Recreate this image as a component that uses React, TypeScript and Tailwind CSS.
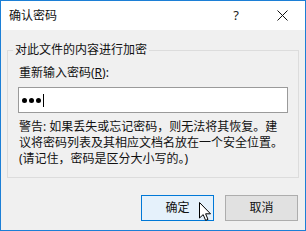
import React from 'react';

const font = { fontFamily: '"Noto Sans", "Noto Sans CJK SC", sans-serif' };

export default function App() {
  return (
    <div
      className="w-[306px] h-[231px] border border-[#1c7fd6] flex flex-col text-[12px] text-black select-none"
      style={font}
    >
      {/* Title bar */}
      <div className="h-[29px] bg-white flex items-center shrink-0">
        <div className="flex-1 pl-[8px] leading-[16px] text-[#111]">确认密码</div>
        <div className="w-[46px] h-full flex items-center justify-center text-[13px] leading-none text-[#222]">?</div>
        <div className="w-[46px] h-full flex items-center justify-center">
          <svg width="11" height="11" viewBox="0 0 11 11">
            <path d="M0.5 0.5 L10.5 10.5 M10.5 0.5 L0.5 10.5" stroke="#111" strokeWidth="1" fill="none" />
          </svg>
        </div>
      </div>

      {/* Body */}
      <div className="flex-1 bg-[#f0f0f0] px-[6px] flex flex-col relative">
        <fieldset className="mt-[12px] border border-[#dcdcdc]">
          <legend className="ml-[5px] px-[2px] leading-[16px] text-[#111]">对此文件的内容进行加密</legend>
          <div className="px-[10px] pt-[7px] pb-[10px] flex flex-col">
            <label className="pl-[1px] leading-[16px] text-[#111]">
              重新输入密码(<span className="underline">R</span>):
            </label>
            <div className="mt-[6px] h-[26px] w-full bg-white border border-[#9a9a9a] flex items-center pl-[3px]">
              <div className="flex items-center gap-[2px]">
                <span className="w-[5px] h-[5px] rounded-full bg-black" />
                <span className="w-[5px] h-[5px] rounded-full bg-black" />
                <span className="w-[5px] h-[5px] rounded-full bg-black" />
              </div>
              <span className="ml-[2px] w-[1px] h-[13px] bg-black" />
            </div>
            <div className="mt-[6px] pl-[1px] leading-[16px] text-[#111] whitespace-nowrap">
              <div>警告: 如果丢失或忘记密码，则无法将其恢复。建</div>
              <div>议将密码列表及其相应文档名放在一个安全位置。</div>
              <div>(请记住，密码是区分大小写的。)</div>
            </div>
          </div>
        </fieldset>

        <div className="mt-[17px] pr-[1px] flex justify-end gap-[11px]">
          <button className="w-[73px] h-[26px] bg-[#e5f1fb] border border-[#0078d7] leading-[16px] text-[#111]">
            确定
          </button>
          <button className="w-[73px] h-[26px] bg-[#e1e1e1] border border-[#adadad] leading-[16px] text-[#111]">
            取消
          </button>
        </div>

        {/* mouse pointer over the OK button */}
        <svg
          className="absolute left-[198px] top-[172px] pointer-events-none"
          width="13"
          height="20"
          viewBox="0 0 13 20"
        >
          <path
            d="M0.5 0.5 V16 L4.2 12.6 L6.6 18.4 L9 17.4 L6.6 11.8 H11.5 Z"
            fill="#fff"
            stroke="#000"
            strokeWidth="1"
            strokeLinejoin="miter"
          />
        </svg>
      </div>
    </div>
  );
}
